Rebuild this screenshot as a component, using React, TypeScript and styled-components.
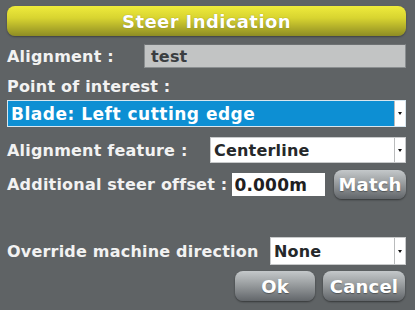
import React from 'react';
import styled, { createGlobalStyle } from 'styled-components';

const Global = createGlobalStyle`
  html, body {
    margin: 0;
    padding: 0;
    background: #5f6365;
  }
`;

const Screen = styled.div`
  width: 415px;
  height: 310px;
  box-sizing: border-box;
  padding: 6px 9px 0 7px;
  display: flex;
  flex-direction: column;
  background: #5f6365;
  font-family: 'DejaVu Sans', sans-serif;
  font-weight: bold;
  font-size: 16px;
  letter-spacing: 0.2px;
  color: #f2f2f2;
  overflow: hidden;
`;

const TitleBar = styled.div`
  height: 30px;
  border-radius: 8px;
  background: linear-gradient(to bottom, #efeb3c 0%, #d8d430 40%, #8e8c24 100%);
  box-shadow: 0 1px 2px rgba(0, 0, 0, 0.35);
  display: flex;
  align-items: center;
  justify-content: center;
  font-size: 18px;
  letter-spacing: 0.4px;
  color: #ffffff;
  text-shadow: 0 0 1px rgba(80, 80, 0, 0.6);
`;

const Row = styled.div<{ $mt: number; $h: number }>`
  display: flex;
  align-items: center;
  margin-top: ${(p) => p.$mt}px;
  height: ${(p) => p.$h}px;
`;

const Label = styled.span<{ $w?: number }>`
  flex: ${(p) => (p.$w ? `0 0 ${p.$w}px` : '0 0 auto')};
  white-space: nowrap;
`;

const ReadOnlyField = styled.div`
  flex: 1;
  height: 24px;
  box-sizing: border-box;
  background: #c2c4c4;
  border: 1px solid #8a8e90;
  border-top-color: #6d7173;
  color: #3a3d40;
  padding: 0 6px;
  display: flex;
  align-items: center;
`;

const Select = styled.div<{ $blue?: boolean }>`
  flex: 1;
  height: 100%;
  box-sizing: border-box;
  display: flex;
  align-items: stretch;
  background: ${(p) => (p.$blue ? '#0d8fd3' : '#ffffff')};
  border: 1px solid ${(p) => (p.$blue ? '#d8e6ee' : '#c8cacb')};
  color: ${(p) => (p.$blue ? '#ffffff' : '#25282a')};
  font-size: ${(p) => (p.$blue ? '17px' : '16px')};
  letter-spacing: ${(p) => (p.$blue ? '0.5px' : '0.2px')};
`;

const SelectValue = styled.div`
  flex: 1;
  display: flex;
  align-items: center;
  padding: 0 3px;
  white-space: nowrap;
  overflow: hidden;
`;

const SelectArrow = styled.div`
  flex: 0 0 10px;
  background: #ffffff;
  border-left: 1px solid #b9bbbc;
  display: flex;
  align-items: center;
  justify-content: center;

  &::after {
    content: '';
    width: 0;
    height: 0;
    border-left: 2px solid transparent;
    border-right: 2px solid transparent;
    border-top: 3px solid #111;
  }
`;

const NumberField = styled.div`
  flex: 0 0 93px;
  height: 23px;
  box-sizing: border-box;
  background: #ffffff;
  color: #1e2022;
  font-size: 17px;
  padding: 0 2px;
  display: flex;
  align-items: center;
  margin-left: 5px;
`;

const GreyButton = styled.div<{ $w: number; $h: number }>`
  width: ${(p) => p.$w}px;
  height: ${(p) => p.$h}px;
  box-sizing: border-box;
  border-radius: 8px;
  background: linear-gradient(to bottom, #c4c8ca 0%, #9ea2a4 40%, #62666a 100%);
  box-shadow: 0 1px 2px rgba(0, 0, 0, 0.45);
  color: #ffffff;
  font-size: 18px;
  display: flex;
  align-items: center;
  justify-content: center;
  text-shadow: 0 1px 1px rgba(0, 0, 0, 0.35);
`;

const ButtonRow = styled.div`
  display: flex;
  justify-content: flex-end;
  gap: 8px;
  margin-top: 6px;
  margin-right: 1px;
`;

export default function App() {
  return (
    <>
      <Global />
      <Screen>
        <TitleBar>Steer Indication</TitleBar>
        <Row $mt={8} $h={24}>
          <Label $w={137}>Alignment :</Label>
          <ReadOnlyField>test</ReadOnlyField>
        </Row>
        <Row $mt={7} $h={22}>
          <Label>Point of interest :</Label>
        </Row>
        <Row $mt={3} $h={27}>
          <Select $blue>
            <SelectValue>Blade: Left cutting edge</SelectValue>
            <SelectArrow />
          </Select>
        </Row>
        <Row $mt={10} $h={26}>
          <Label $w={203}>Alignment feature :</Label>
          <Select>
            <SelectValue>Centerline</SelectValue>
            <SelectArrow />
          </Select>
        </Row>
        <Row $mt={7} $h={29}>
          <Label>Additional steer offset :</Label>
          <NumberField>0.000m</NumberField>
          <div style={{ flex: 1 }} />
          <GreyButton $w={72} $h={29}>Match</GreyButton>
        </Row>
        <Row $mt={38} $h={28}>
          <Label $w={263}>Override machine direction</Label>
          <Select>
            <SelectValue>None</SelectValue>
            <SelectArrow />
          </Select>
        </Row>
        <ButtonRow>
          <GreyButton $w={80} $h={30}>Ok</GreyButton>
          <GreyButton $w={82} $h={30}>Cancel</GreyButton>
        </ButtonRow>
      </Screen>
    </>
  );
}
